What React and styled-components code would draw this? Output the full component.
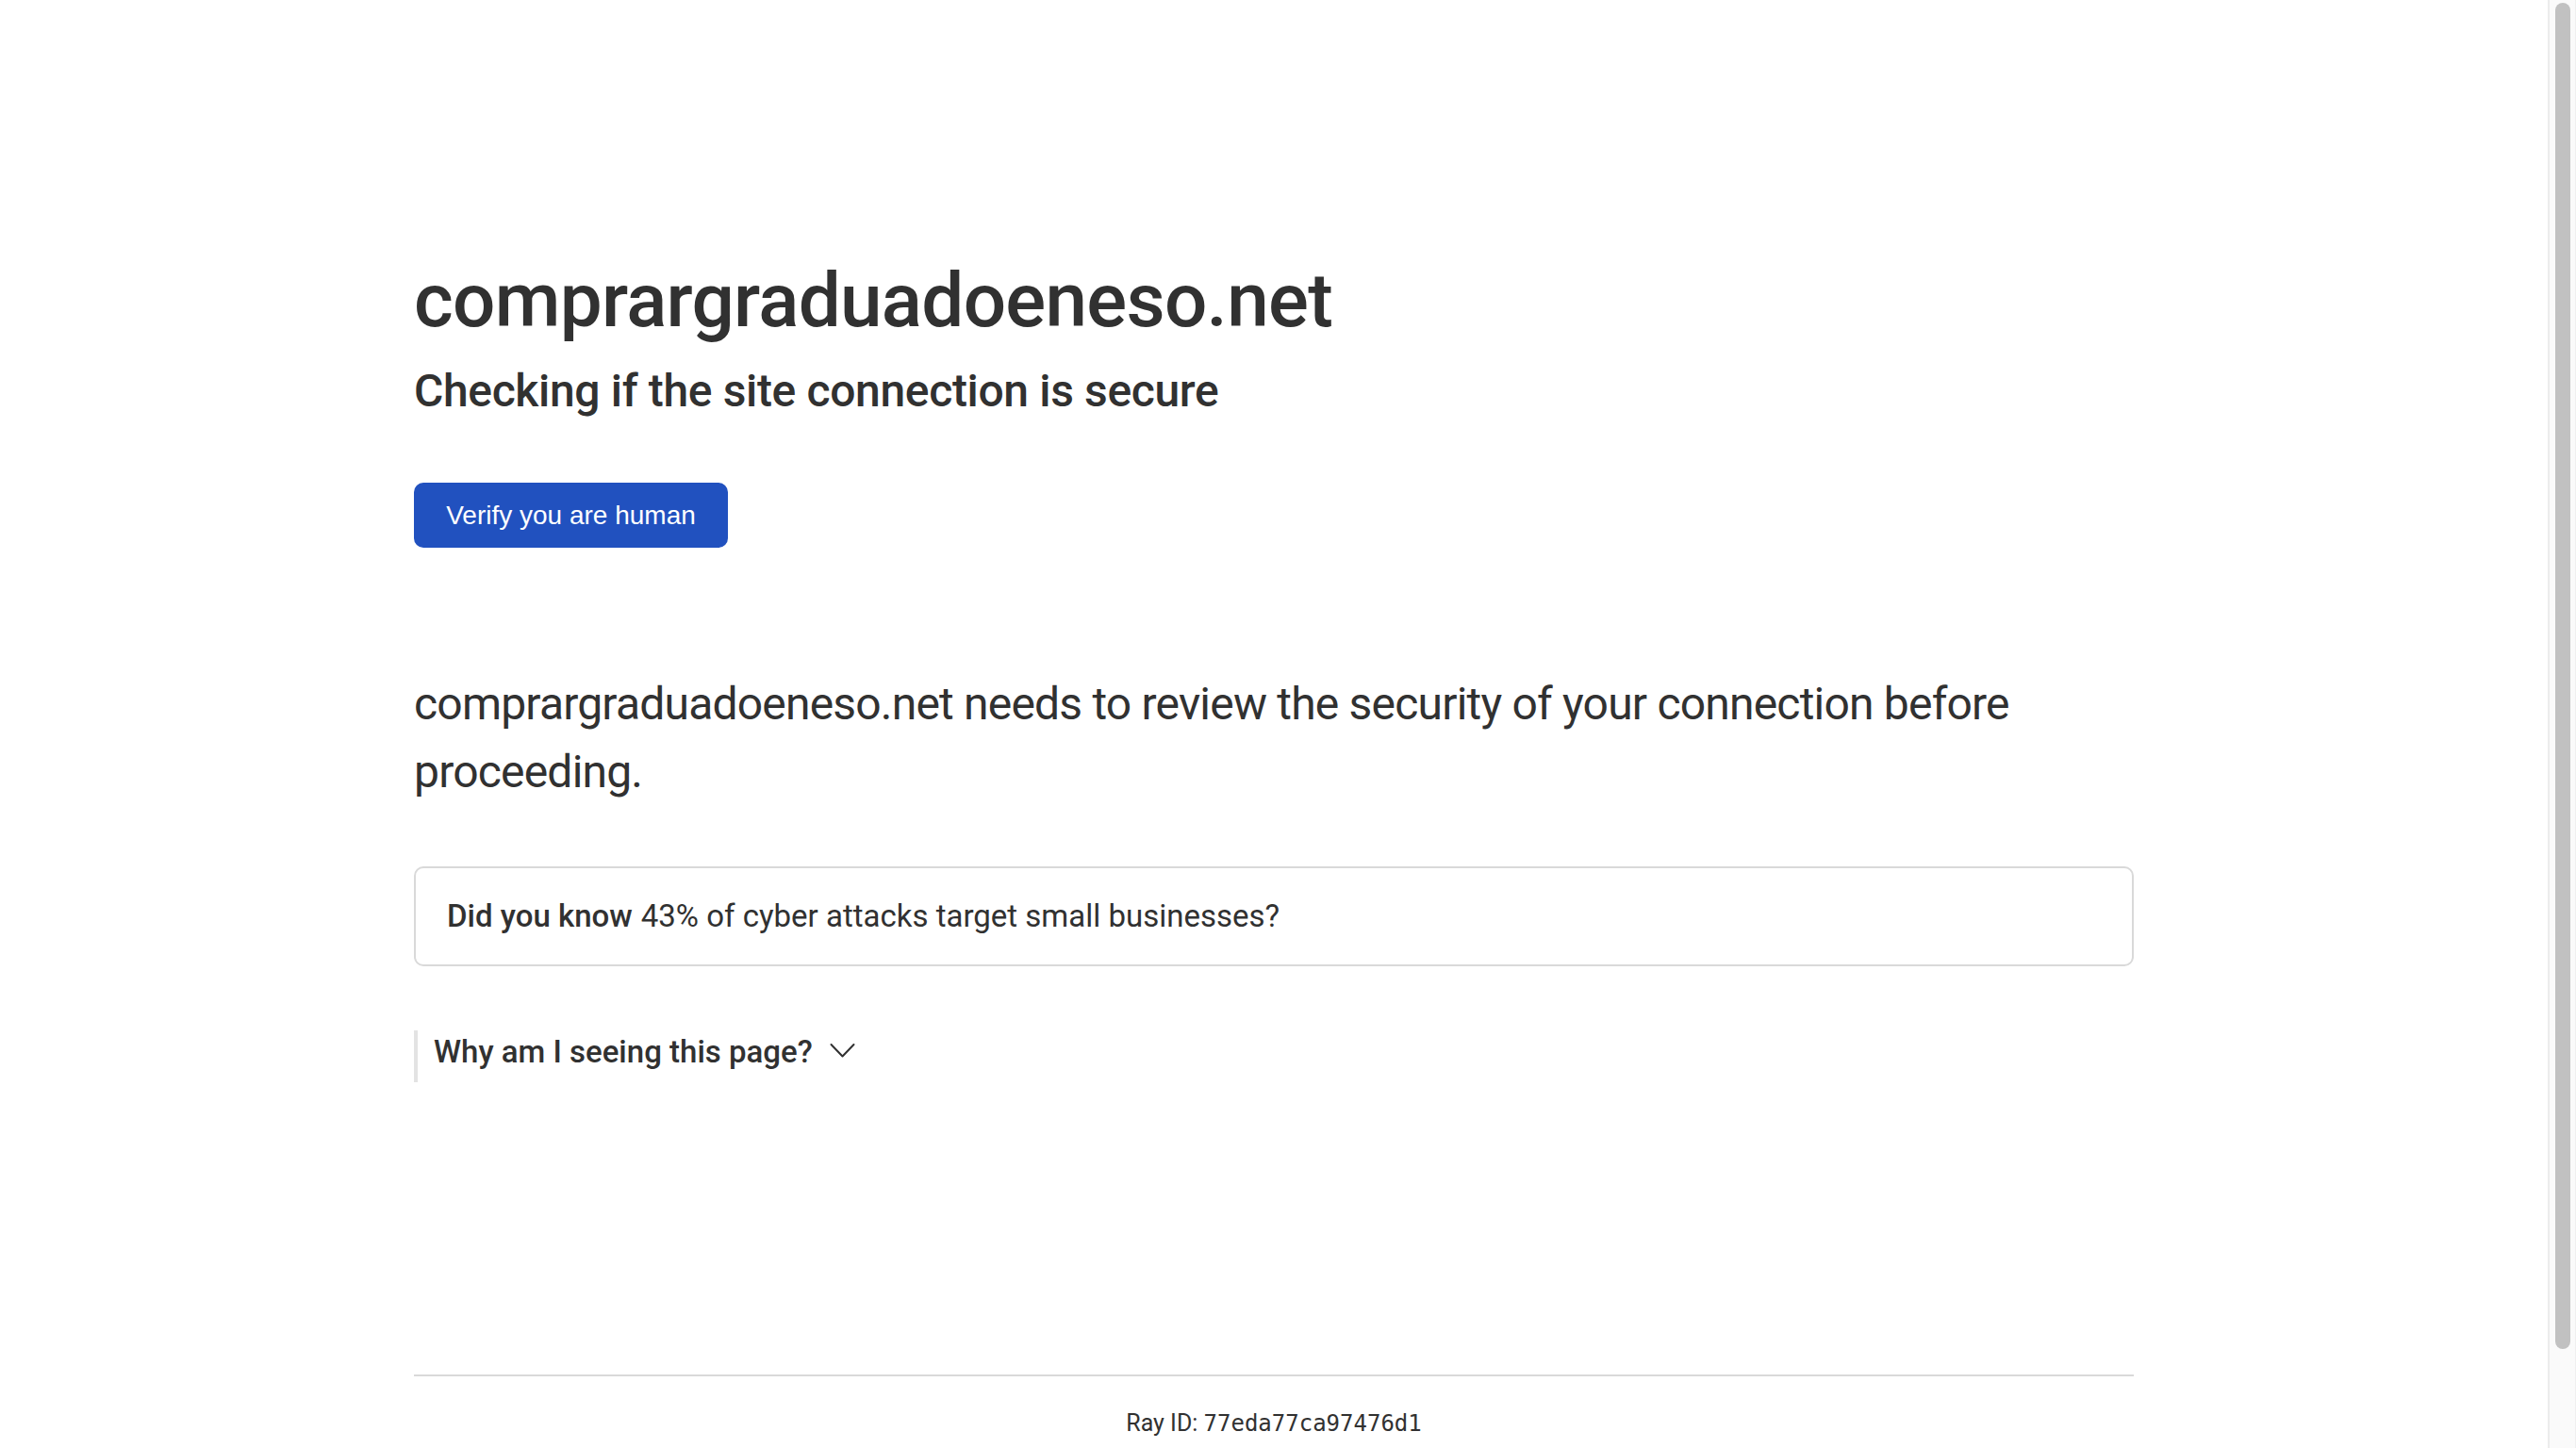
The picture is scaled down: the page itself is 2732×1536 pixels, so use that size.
import React from "react"
import styled, { createGlobalStyle } from "styled-components"

const GlobalStyle = createGlobalStyle`
    html, body {
        margin: 0;
        padding: 0;
        background: #fff;
        color: #313131;
        font-family: Roboto, Inter, "Noto Sans", sans-serif;
    }
    * {
        box-sizing: border-box;
    }
`

const App = () => {
    return (
        <Viewport>
            <GlobalStyle />
            <Page>
                <Main>
                    <Title>comprargraduadoeneso.net</Title>
                    <Subtitle>Checking if the site connection is secure</Subtitle>
                    <VerifyButton type="button">Verify you are human</VerifyButton>
                    <CoreMsg>
                        comprargraduadoeneso.net needs to review the security of your connection before
                        proceeding.
                    </CoreMsg>
                    <FactBox>
                        <b>Did you know</b> 43% of cyber attacks target small businesses?
                    </FactBox>
                    <WhyRow>
                        <span>Why am I seeing this page?</span>
                        <svg width="27" height="17" viewBox="0 0 27 17" fill="none">
                            <polyline
                                points="1.5,2 13.5,14.5 25.5,2"
                                stroke="#313131"
                                strokeWidth="2"
                                strokeLinecap="round"
                                strokeLinejoin="round"
                            />
                        </svg>
                    </WhyRow>
                </Main>
                <Footer>
                    <FooterInner>
                        Ray ID: <RayCode>77eda77ca97476d1</RayCode>
                    </FooterInner>
                </Footer>
            </Page>
            <ScrollTrack>
                <ScrollThumb />
            </ScrollTrack>
        </Viewport>
    )
}

const Viewport = styled.div`
    height: 1536px;
    display: flex;
    overflow: hidden;
`
const Page = styled.div`
    flex: 1;
    min-width: 0;
    display: flex;
    flex-direction: column;
`
const Main = styled.main`
    width: 100%;
    max-width: 1920px;
    margin: 259px auto 0;
    padding: 0 48px;
    display: flex;
    flex-direction: column;
    align-items: flex-start;
`
const Title = styled.h1`
    margin: 0;
    font-size: 80px;
    font-weight: 500;
    line-height: 120px;
    letter-spacing: -0.7px;
`
const Subtitle = styled.h2`
    margin: 0;
    font-size: 48px;
    font-weight: 500;
    line-height: 72px;
    letter-spacing: -0.35px;
`
const VerifyButton = styled.button`
    margin-top: 61px;
    width: 333px;
    height: 69px;
    border: none;
    border-radius: 10px;
    background: #2151bf;
    color: #fff;
    font-family: "Liberation Sans", Arial, sans-serif;
    font-size: 28px;
    padding: 0;
    cursor: pointer;
`
const CoreMsg = styled.p`
    margin: 130px 0 0;
    font-size: 48px;
    font-weight: 400;
    line-height: 72px;
    letter-spacing: -0.8px;
`
const FactBox = styled.div`
    margin-top: 64px;
    width: 100%;
    height: 106px;
    display: flex;
    align-items: center;
    padding: 0 33px;
    border: 2px solid #d9d9d9;
    border-radius: 10px;
    font-size: 33px;
    line-height: 40px;

    b {
        font-weight: 500;
        margin-right: 9px;
    }
`
const WhyRow = styled.div`
    margin-top: 68px;
    height: 55px;
    display: flex;
    align-items: center;
    gap: 18px;
    padding-left: 17px;
    border-left: 4px solid #e3e3e3;
    font-size: 33px;
    font-weight: 500;

    span {
        margin-top: -10px;
    }
    svg {
        margin-top: -13px;
    }
`
const Footer = styled.footer`
    width: 100%;
    max-width: 1920px;
    margin: 310px auto 0;
    padding: 0 48px;
`
const FooterInner = styled.div`
    border-top: 2px solid #d9d9d9;
    padding: 32px 0;
    text-align: center;
    font-size: 25px;
    line-height: 36px;
`
const RayCode = styled.code`
    font-family: "DejaVu Sans Mono", monospace;
    font-size: 24px;
`
const ScrollTrack = styled.div`
    width: 30px;
    flex-shrink: 0;
    background: #fafafa;
    border-left: 2px solid #ececec;
    border-right: 1px solid #f0f0f0;
    padding: 3px 5px 0 6px;
`
const ScrollThumb = styled.div`
    width: 16px;
    height: 1428px;
    background: #c1c1c1;
    border-radius: 8px;
`

export default App
